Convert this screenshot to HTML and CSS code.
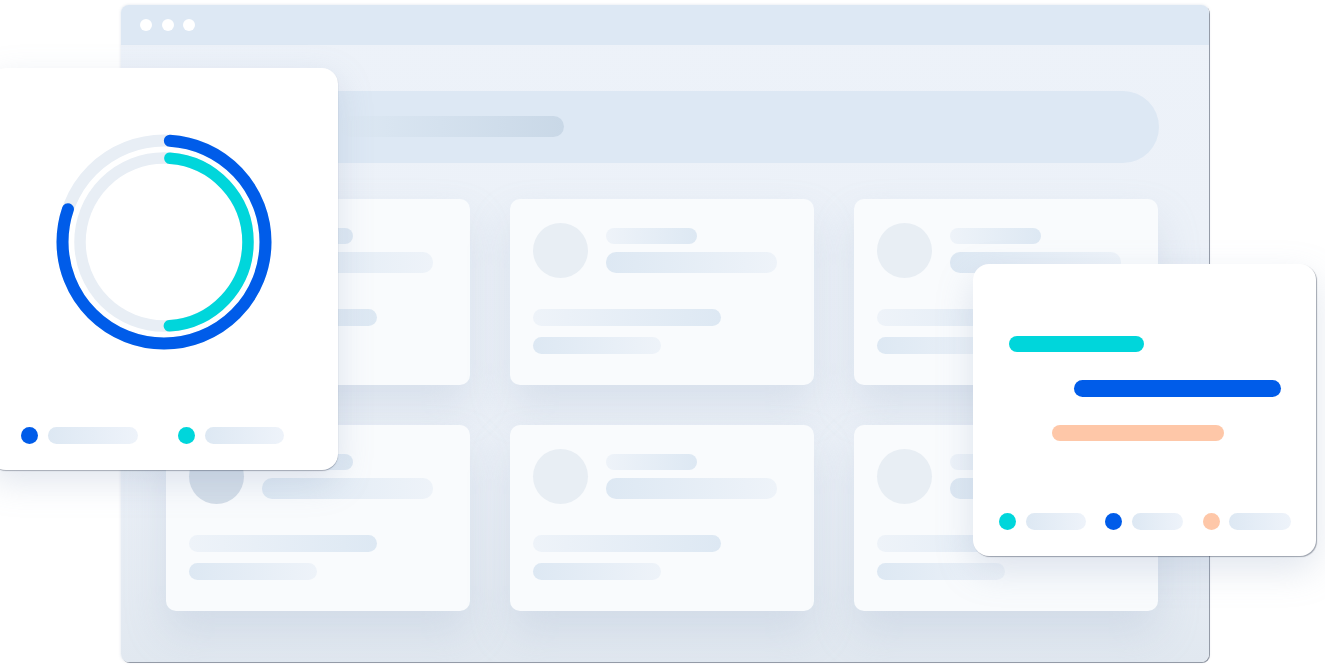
FILE: index.html
```html
<!DOCTYPE html>
<html lang="en">
<head>
<meta charset="utf-8">
<title>Dashboard illustration</title>
<link rel="stylesheet" href="styles.css">
</head>
<body>
<div class="stage">
  <div class="window">
    <div class="titlebar">
      <span class="tdot"></span><span class="tdot"></span><span class="tdot"></span>
    </div>
    <div class="content">
      <div class="search"><span class="search-pill"></span></div>
      <div class="grid">
        <div class="card">
          <div class="card-head">
            <span class="avatar"></span>
            <div class="head-lines"><span class="ln l1 up"></span><span class="ln l2 down"></span></div>
          </div>
          <span class="ln l3 up"></span><span class="ln l4 down"></span>
        </div>
        <div class="card">
          <div class="card-head">
            <span class="avatar"></span>
            <div class="head-lines"><span class="ln l1 up"></span><span class="ln l2 down"></span></div>
          </div>
          <span class="ln l3 up"></span><span class="ln l4 down"></span>
        </div>
        <div class="card">
          <div class="card-head">
            <span class="avatar"></span>
            <div class="head-lines"><span class="ln l1 up"></span><span class="ln l2 down"></span></div>
          </div>
          <span class="ln l3 up"></span><span class="ln l4 down"></span>
        </div>
        <div class="card">
          <div class="card-head">
            <span class="avatar dark"></span>
            <div class="head-lines"><span class="ln l1 up"></span><span class="ln l2 down"></span></div>
          </div>
          <span class="ln l3 up"></span><span class="ln l4 down"></span>
        </div>
        <div class="card">
          <div class="card-head">
            <span class="avatar"></span>
            <div class="head-lines"><span class="ln l1 up"></span><span class="ln l2 down"></span></div>
          </div>
          <span class="ln l3 up"></span><span class="ln l4 down"></span>
        </div>
        <div class="card">
          <div class="card-head">
            <span class="avatar"></span>
            <div class="head-lines"><span class="ln l1 up"></span><span class="ln l2 down"></span></div>
          </div>
          <span class="ln l3 up"></span><span class="ln l4 down"></span>
        </div>
      </div>
    </div>
  </div>

  <div class="panel donut-panel">
    <svg class="donut" width="220" height="220" viewBox="0 0 220 220">
      <circle cx="110" cy="110" r="101.5" fill="none" stroke="#e8eef5" stroke-width="12"/>
      <circle cx="110" cy="110" r="101.5" fill="none" stroke="#005ce9" stroke-width="12" stroke-linecap="round"
        stroke-dasharray="505 700" stroke-dashoffset="-6" transform="rotate(-90 110 110)"/>
      <circle cx="110" cy="110" r="84" fill="none" stroke="#e8eef5" stroke-width="11.5"/>
      <circle cx="110" cy="110" r="84" fill="none" stroke="#00d6db" stroke-width="11.5" stroke-linecap="round"
        stroke-dasharray="252 600" stroke-dashoffset="-6" transform="rotate(-90 110 110)"/>
    </svg>
    <div class="legend donut-legend">
      <span class="dot blue"></span><span class="lpill w90"></span>
      <span class="dot cyan gap-big"></span><span class="lpill w79"></span>
    </div>
  </div>

  <div class="panel bars-panel">
    <div class="bars">
      <span class="bar cyan b1"></span>
      <span class="bar blue b2"></span>
      <span class="bar peach b3"></span>
    </div>
    <div class="legend bars-legend">
      <span class="dot cyan"></span><span class="lpill w60"></span>
      <span class="dot blue g2"></span><span class="lpill w51"></span>
      <span class="dot peach g3"></span><span class="lpill w62"></span>
    </div>
  </div>
</div>
</body>
</html>
```

FILE: styles.css
```css
* { box-sizing: border-box; }

html, body {
  margin: 0;
  padding: 0;
  background: #ffffff;
  font-family: "Liberation Sans", Arial, sans-serif;
  overflow: hidden;
}

.stage {
  position: relative;
  width: 1325px;
  height: 667px;
  padding: 5px 0 0 121px;
}

/* ---------- browser window ---------- */
.window {
  width: 1088px;
  height: 657px;
  border-radius: 8px;
  overflow: hidden;
  background: linear-gradient(180deg, #edf2f9 0%, #ebf0f7 70%, #e1e8f0 100%);
  box-shadow: 1px 1px 0 rgba(70, 80, 100, 0.55), 0 0 3px rgba(120, 140, 170, 0.25);
}

.titlebar {
  height: 40px;
  background: #dde8f4;
  display: flex;
  align-items: center;
  gap: 9.5px;
  padding-left: 19px;
}

.tdot {
  width: 12px;
  height: 12px;
  border-radius: 50%;
  background: #ffffff;
}

.content {
  padding: 46px 50px 0 45px;
}

.search {
  height: 72px;
  border-radius: 36px;
  background: #dde8f4;
  padding: 25px 0 0 174px;
}

.search-pill {
  display: block;
  width: 224px;
  height: 21px;
  border-radius: 11px;
  background: linear-gradient(90deg, #dde8f3 0%, #d4e1ee 45%, #c9d8e7 100%);
}

.grid {
  margin-top: 36px;
  display: grid;
  grid-template-columns: repeat(3, 304px);
  grid-auto-rows: 186px;
  column-gap: 40px;
  row-gap: 40px;
}

.card {
  background: #f9fbfd;
  border-radius: 10px;
  padding: 24px 23px 0 23px;
  display: flex;
  flex-direction: column;
  box-shadow: 0 22px 40px rgba(168, 186, 210, 0.3);
}

.card-head {
  display: flex;
  gap: 18px;
  height: 55px;
}

.avatar {
  flex: none;
  width: 55px;
  height: 55px;
  border-radius: 50%;
  background: #e8eef4;
}

.avatar.dark { background: #d3dde8; }

.head-lines {
  display: flex;
  flex-direction: column;
  padding-top: 4.5px;
  gap: 7.5px;
}

.ln {
  display: block;
  border-radius: 10px;
}

.ln.up   { background: linear-gradient(90deg, #eef3f9 0%, #dde8f3 100%); }
.ln.down { background: linear-gradient(90deg, #dde8f3 0%, #eef3f9 100%); }

.l1 { width: 91px;  height: 16.5px; }
.l2 { width: 171px; height: 21.5px; }
.l3 { width: 188px; height: 17px; margin-top: 31px; }
.l4 { width: 128px; height: 17px; margin-top: 11px; }

/* ---------- floating panels ---------- */
.panel {
  position: absolute;
  background: #ffffff;
  border-radius: 16px;
}

.donut-panel {
  left: -10px;
  top: 68px;
  width: 348px;
  height: 402px;
  padding: 64px 0 0 64px;
  box-shadow: 0 1px 1px rgba(40, 50, 70, 0.35), 0 12px 34px rgba(140, 160, 190, 0.26);
}

.donut { display: block; }

.legend {
  display: flex;
  align-items: center;
}

.donut-legend {
  margin: 75px 0 0 -33px;
}

.dot {
  flex: none;
  width: 17px;
  height: 17px;
  border-radius: 50%;
}

.dot.blue  { background: #005ce9; }
.dot.cyan  { background: #00d6db; }
.dot.peach { background: #fec7a8; }

.lpill {
  display: block;
  height: 16.5px;
  border-radius: 9px;
  margin-left: 9.5px;
  background: linear-gradient(90deg, #dde8f3 0%, #eef3fa 100%);
}

.w90 { width: 90px; }
.w79 { width: 79px; }
.w60 { width: 60px; }
.w51 { width: 51px; }
.w62 { width: 62px; }

.gap-big { margin-left: 40.5px; }

.bars-panel {
  left: 973px;
  top: 264px;
  width: 343px;
  height: 292px;
  padding: 71.5px 0 0 0;
  box-shadow: 1px 1px 1px rgba(40, 50, 70, 0.4), 0 14px 36px rgba(140, 160, 190, 0.26);
}

.bars {
  display: flex;
  flex-direction: column;
  gap: 28px;
}

.bar {
  display: block;
  height: 16.5px;
  border-radius: 9px;
}

.bar.cyan  { background: #00d6db; }
.bar.blue  { background: #005ce9; }
.bar.peach { background: #fec7a8; }

.b1 { margin-left: 35.5px;  width: 135.5px; }
.b2 { margin-left: 100.5px; width: 207.5px; }
.b3 { margin-left: 78.5px;  width: 172.5px; }

.bars-legend {
  margin: 72px 0 0 26px;
}

.g2 { margin-left: 19.5px; }
.g3 { margin-left: 20px; }
```
